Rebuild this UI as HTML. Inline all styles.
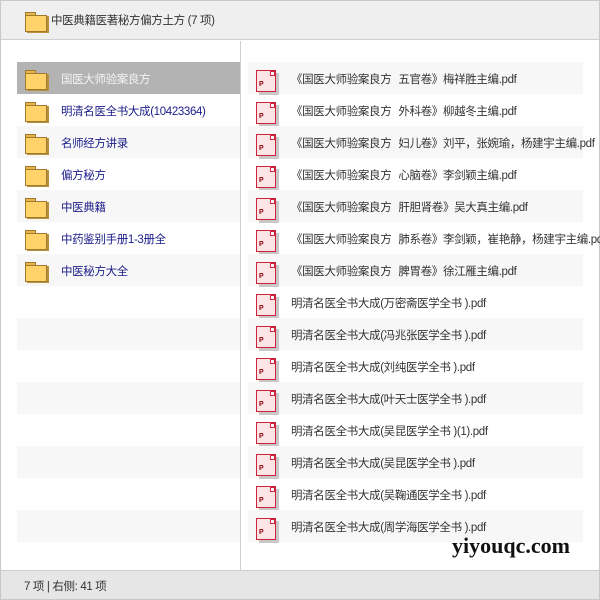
<!DOCTYPE html><html><head><meta charset="utf-8"><style>
*{margin:0;padding:0;box-sizing:border-box}
body{width:600px;height:600px;overflow:hidden;background:#fff;font-family:"Liberation Sans","Noto Sans CJK SC",sans-serif;font-size:11.5px;letter-spacing:-0.35px;position:relative}
.frame{position:absolute;left:0;top:0;width:600px;height:600px;border:1px solid #c8c8c8}
.hdr{position:absolute;left:1px;top:1px;width:598px;height:39px;background:#efefef;border-bottom:1px solid #cfcfcf}
.hdr span{position:absolute;left:50px;top:11px;color:#333}
.fold{position:absolute;width:20px;height:18px}
.fold:before{content:"";position:absolute;left:0;top:0;width:9px;height:4px;background:#e8b54a;border:1px solid #a07a2a;border-bottom:none}
.fold:after{content:"";position:absolute;left:0;top:3px;width:20px;height:15px;background:#ffd36a;border:1px solid #a07a2a;box-shadow:2px 1px 0 #b89040}
.row{position:absolute;height:32px}
.l{left:17px;width:223px}
.r{left:248px;width:335px}
.s{background:#f7f7f7}
.sel{background:#b3b3b3}
.l span{position:absolute;left:44px;top:9px;color:#1c1c8a}
.sel span{color:#f4f4f4}
.r span{position:absolute;left:43px;top:9px;color:#333;white-space:nowrap}
.r span i{font-style:normal;display:inline-block;width:7px}
.l .fold{left:8px;top:8px}
.pdf{position:absolute;left:8px;top:8px;width:20px;height:22px;background:#fde5e5;border:1px solid #d0203a;box-shadow:3px 3px 0 #c8c8c8}
.pdf:before{content:"P";position:absolute;left:2px;top:10px;font-size:7px;font-weight:bold;color:#8a0010;line-height:8px}
.pdf:after{content:"";position:absolute;right:0;top:0;width:3px;height:3px;border:1px solid #d0203a;background:#fff}
.div{position:absolute;left:240px;top:41px;width:1px;height:529px;background:#cfcfcf}
.ftr{position:absolute;left:1px;top:570px;width:598px;height:29px;background:#e6e6e6;border-top:1px solid #cfcfcf}
.ftr span{position:absolute;left:23px;top:7px;color:#333}
.wm{position:absolute;left:452px;top:533px;font-family:"Liberation Serif",serif;font-weight:bold;font-size:22px;letter-spacing:0;color:#111}
</style></head><body>
<div class="frame"></div>
<div class="hdr"><div class="fold" style="left:24px;top:11px"></div><span>中医典籍医著秘方偏方土方 (7 项)</span></div>
<div class="div"></div>
<div class="row l sel" style="top:62px"><div class="fold"></div><span>国医大师验案良方</span></div>
<div class="row l" style="top:94px"><div class="fold"></div><span>明清名医全书大成(10423364)</span></div>
<div class="row l s" style="top:126px"><div class="fold"></div><span>名师经方讲录</span></div>
<div class="row l" style="top:158px"><div class="fold"></div><span>偏方秘方</span></div>
<div class="row l s" style="top:190px"><div class="fold"></div><span>中医典籍</span></div>
<div class="row l" style="top:222px"><div class="fold"></div><span>中药鉴别手册1-3册全</span></div>
<div class="row l s" style="top:254px"><div class="fold"></div><span>中医秘方大全</span></div>
<div class="row l s" style="top:318px"></div>
<div class="row l s" style="top:382px"></div>
<div class="row l s" style="top:446px"></div>
<div class="row l s" style="top:510px"></div>

<div class="row r s" style="top:62px"><div class="pdf"></div><span>《国医大师验案良方<i> </i>五官卷》梅祥胜主编.pdf</span></div>
<div class="row r" style="top:94px"><div class="pdf"></div><span>《国医大师验案良方<i> </i>外科卷》柳越冬主编.pdf</span></div>
<div class="row r s" style="top:126px"><div class="pdf"></div><span>《国医大师验案良方<i> </i>妇儿卷》刘平，张婉瑜，杨建宇主编.pdf</span></div>
<div class="row r" style="top:158px"><div class="pdf"></div><span>《国医大师验案良方<i> </i>心脑卷》李剑颖主编.pdf</span></div>
<div class="row r s" style="top:190px"><div class="pdf"></div><span>《国医大师验案良方<i> </i>肝胆肾卷》吴大真主编.pdf</span></div>
<div class="row r" style="top:222px"><div class="pdf"></div><span>《国医大师验案良方<i> </i>肺系卷》李剑颖，崔艳静，杨建宇主编.pdf</span></div>
<div class="row r s" style="top:254px"><div class="pdf"></div><span>《国医大师验案良方<i> </i>脾胃卷》徐江雁主编.pdf</span></div>
<div class="row r" style="top:286px"><div class="pdf"></div><span>明清名医全书大成(万密斋医学全书 ).pdf</span></div>
<div class="row r s" style="top:318px"><div class="pdf"></div><span>明清名医全书大成(冯兆张医学全书 ).pdf</span></div>
<div class="row r" style="top:350px"><div class="pdf"></div><span>明清名医全书大成(刘纯医学全书 ).pdf</span></div>
<div class="row r s" style="top:382px"><div class="pdf"></div><span>明清名医全书大成(叶天士医学全书 ).pdf</span></div>
<div class="row r" style="top:414px"><div class="pdf"></div><span>明清名医全书大成(吴昆医学全书 )(1).pdf</span></div>
<div class="row r s" style="top:446px"><div class="pdf"></div><span>明清名医全书大成(吴昆医学全书 ).pdf</span></div>
<div class="row r" style="top:478px"><div class="pdf"></div><span>明清名医全书大成(吴鞠通医学全书 ).pdf</span></div>
<div class="row r s" style="top:510px"><div class="pdf"></div><span>明清名医全书大成(周学海医学全书 ).pdf</span></div>
<div class="wm">yiyouqc.com</div>
<div class="ftr"><span>7 项 | 右侧: 41 项</span></div>
</body></html>
